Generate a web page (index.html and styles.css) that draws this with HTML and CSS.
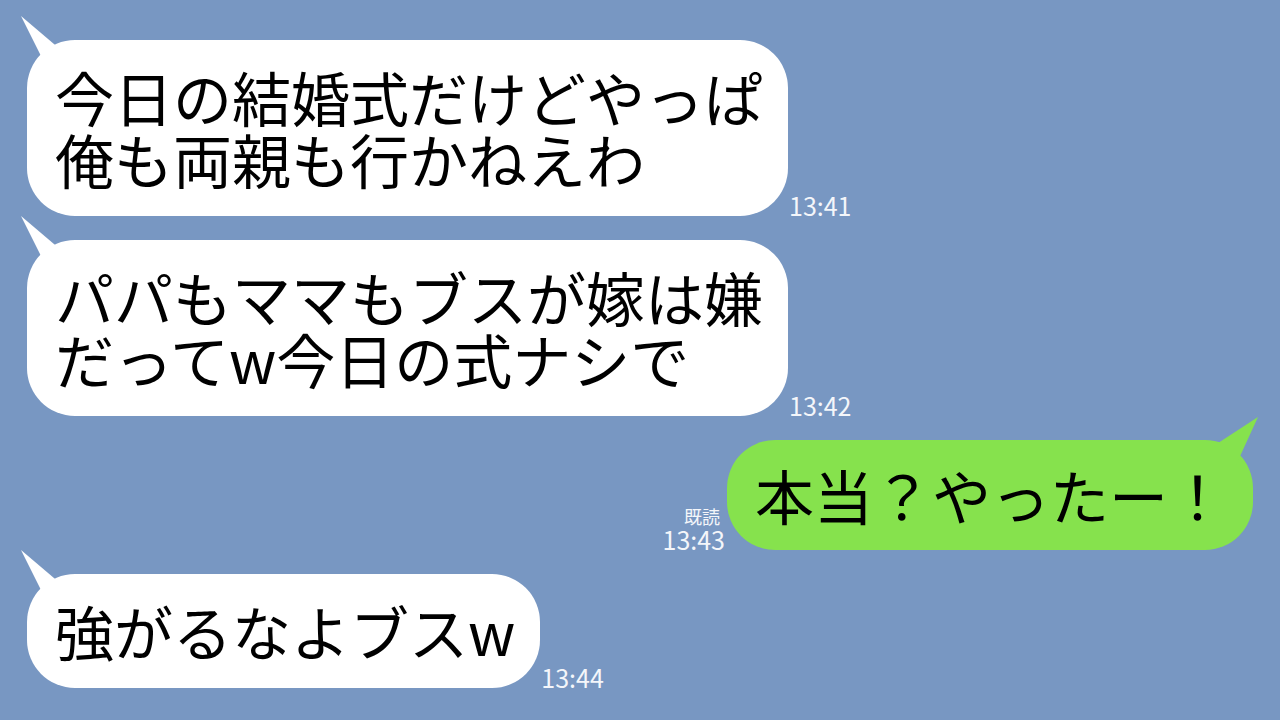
FILE: index.html
```html
<!DOCTYPE html>
<html lang="ja">
<head>
    <meta charset="UTF-8">
    <meta name="viewport" content="width=device-width, initial-scale=1.0">
    <title>トーク</title>
    <link rel="stylesheet" href="styles.css">
</head>
<body>
    <main class="chat">
        <div class="row in">
            <div class="bubble">
                <svg class="tail" width="42" height="50" viewBox="0 0 42 50"><polygon points="0,0 24,48 40,34"/></svg>
                今日の結婚式だけどやっぱ<br>俺も両親も行かねえわ
            </div>
            <div class="meta"><span class="time">13:41</span></div>
        </div>

        <div class="row in">
            <div class="bubble">
                <svg class="tail" width="42" height="50" viewBox="0 0 42 50"><polygon points="0,0 24,48 40,34"/></svg>
                パパもママもブスが嫁は嫌<br>だってw今日の式ナシで
            </div>
            <div class="meta"><span class="time">13:42</span></div>
        </div>

        <div class="row out">
            <div class="meta"><span class="read">既読</span><span class="time">13:43</span></div>
            <div class="bubble">
                <svg class="tail" width="50" height="50" viewBox="0 0 50 50"><polygon points="47,1 1,31 25,49"/></svg>
                本当？やったー！
            </div>
        </div>

        <div class="row in">
            <div class="bubble">
                <svg class="tail" width="42" height="50" viewBox="0 0 42 50"><polygon points="0,0 24,48 40,34"/></svg>
                強がるなよブスw
            </div>
            <div class="meta"><span class="time">13:44</span></div>
        </div>
    </main>
</body>
</html>
```

FILE: styles.css
```css
:root {
    --chat-bg: #7897c2;
    --bubble-in: #ffffff;
    --bubble-out: #86e24d;
    --meta: #f4f6fa;
}

body {
    margin: 0;
    background-color: var(--chat-bg);
    font-family: "Noto Sans CJK JP", "Noto Sans", sans-serif;
}

.chat {
    display: flex;
    flex-direction: column;
    gap: 24px;
    padding: 40px 27px 0 27px;
}

.row {
    display: flex;
    align-items: flex-end;
}

.row.out {
    justify-content: flex-end;
}

.bubble {
    position: relative;
    padding: 26px 25px 26px 28px;
    border-radius: 48px;
    font-size: 59px;
    line-height: 62px;
    color: #000;
    white-space: nowrap;
}

.in .bubble {
    background-color: var(--bubble-in);
}

.in .bubble .tail {
    position: absolute;
    left: -6px;
    top: -24px;
    fill: var(--bubble-in);
}

.out .bubble {
    background-color: var(--bubble-out);
    padding: 24px 26px 24px 28px;
}

.out .bubble .tail {
    position: absolute;
    right: -8px;
    top: -24px;
    fill: var(--bubble-out);
}

.meta {
    display: flex;
    flex-direction: column;
    color: var(--meta);
    line-height: 1;
}

.in .meta {
    margin-left: 1px;
    align-items: flex-start;
}

.out .meta {
    margin-right: 2px;
    align-items: flex-end;
}

.time {
    font-size: 25px;
    line-height: 22px;
}

.read {
    font-size: 18px;
    line-height: 24px;
    margin-right: 5px;
}
```
